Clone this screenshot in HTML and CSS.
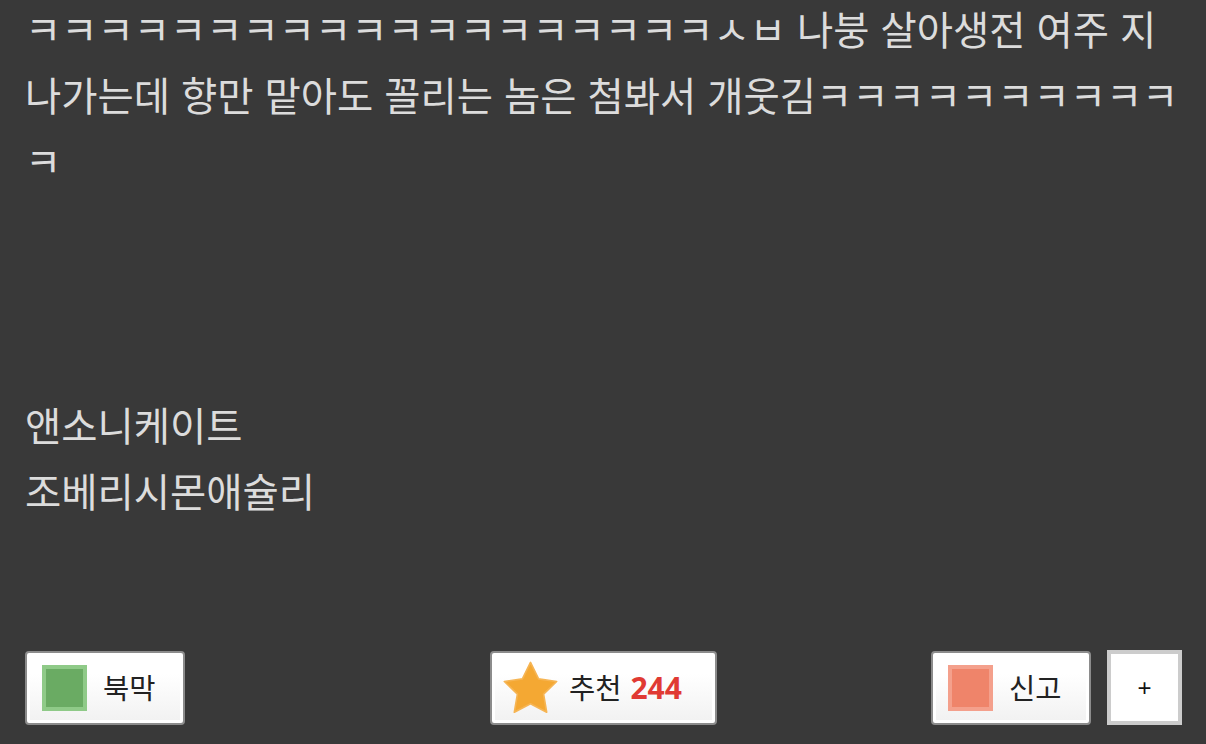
FILE: index.html
```html
<!DOCTYPE html>
<html lang="ko">
<head>
    <meta charset="UTF-8">
    <meta name="viewport" content="width=device-width, initial-scale=1.0">
    <title>게시글</title>
    <link rel="stylesheet" href="styles.css">
</head>
<body>
    <div class="article">
        <div class="post-body">
            <p>ㅋㅋㅋㅋㅋㅋㅋㅋㅋㅋㅋㅋㅋㅋㅋㅋㅋㅋㅋㅅㅂ 나붕 살아생전 여주 지<br>나가는데 향만 맡아도 꼴리는 놈은 첨봐서 개웃김ㅋㅋㅋㅋㅋㅋㅋㅋㅋㅋ<br>ㅋ</p>
            <p><br></p>
            <p><br></p>
            <p><br></p>
            <p>앤소니케이트</p>
            <p>조베리시몬애슐리</p>
        </div>

        <div class="actions">
            <div class="actions-left">
                <button class="btn btn-bookmark">
                    <span class="square square-green"></span>
                    <span class="btn-label">북막</span>
                </button>
            </div>
            <div class="actions-center">
                <button class="btn btn-vote">
                    <svg class="star" viewBox="0 0 100 95" width="55" height="53">
                        <polygon points="50,2 64.7,31.8 97.6,36.6 73.8,59.7 79.4,92.5 50,77 20.6,92.5 26.2,59.7 2.4,36.6 35.3,31.8" fill="#f4a833" stroke="#f6b554" stroke-width="3" stroke-linejoin="round"/>
                    </svg>
                    <span class="btn-label">추천 <b class="vote-count">244</b></span>
                </button>
            </div>
            <div class="actions-right">
                <button class="btn btn-report">
                    <span class="square square-red"></span>
                    <span class="btn-label">신고</span>
                </button>
                <button class="btn-more">+</button>
            </div>
        </div>
    </div>
</body>
</html>
```

FILE: styles.css
```css
body {
    margin: 0;
    background-color: #393939;
    font-family: "Noto Sans CJK KR", "Noto Sans", sans-serif;
}

.article {
    padding: 0 20px 0 25px;
    margin-top: -5px;
}

.post-body {
    color: #dcdcdc;
    font-size: 39.4px;
    line-height: 66px;
}

.post-body p {
    margin: 0;
}

/* bottom buttons */
.actions {
    display: grid;
    grid-template-columns: 1fr auto 1fr;
    align-items: center;
    margin-top: 127px;
    margin-right: 4px;
}

.actions-left {
    display: flex;
    justify-content: flex-start;
}

.actions-right {
    display: flex;
    justify-content: flex-end;
    align-items: center;
    gap: 16px;
}

.btn {
    display: inline-flex;
    align-items: center;
    box-sizing: border-box;
    height: 74px;
    padding: 0;
    border: 2px solid #8c8c8c;
    border-radius: 4px;
    background: linear-gradient(#ffffff 30%, #f1f1f1);
    box-shadow: inset 0 0 0 3px #ffffff;
    color: #222;
    font-family: "Noto Sans CJK KR", "Noto Sans", sans-serif;
    font-size: 28.5px;
    cursor: pointer;
}

.btn-bookmark,
.btn-report {
    width: 160px;
    padding-left: 15px;
}

.btn-vote {
    width: 227px;
    padding-left: 11px;
}

.square {
    box-sizing: border-box;
    width: 45px;
    height: 46px;
    margin-right: 16px;
    border: 4px solid;
}

.square-green {
    background-color: #6aab63;
    border-color: #8fca88;
}

.square-red {
    background-color: #ef846a;
    border-color: #f4a08c;
}

.star {
    margin-right: 11px;
    filter: blur(0.6px);
}

.btn-label {
    line-height: 1;
    white-space: nowrap;
}

.vote-count {
    color: #e03a33;
    font-family: "Open Sans", "Noto Sans", sans-serif;
    font-weight: 700;
    font-size: 30px;
    margin-left: 1px;
}

.btn-more {
    box-sizing: border-box;
    width: 75px;
    height: 75px;
    padding: 0;
    border: 4px solid #cccccc;
    background-color: #ffffff;
    color: #111;
    font-family: "Liberation Sans", sans-serif;
    font-size: 24px;
    cursor: pointer;
}
```
